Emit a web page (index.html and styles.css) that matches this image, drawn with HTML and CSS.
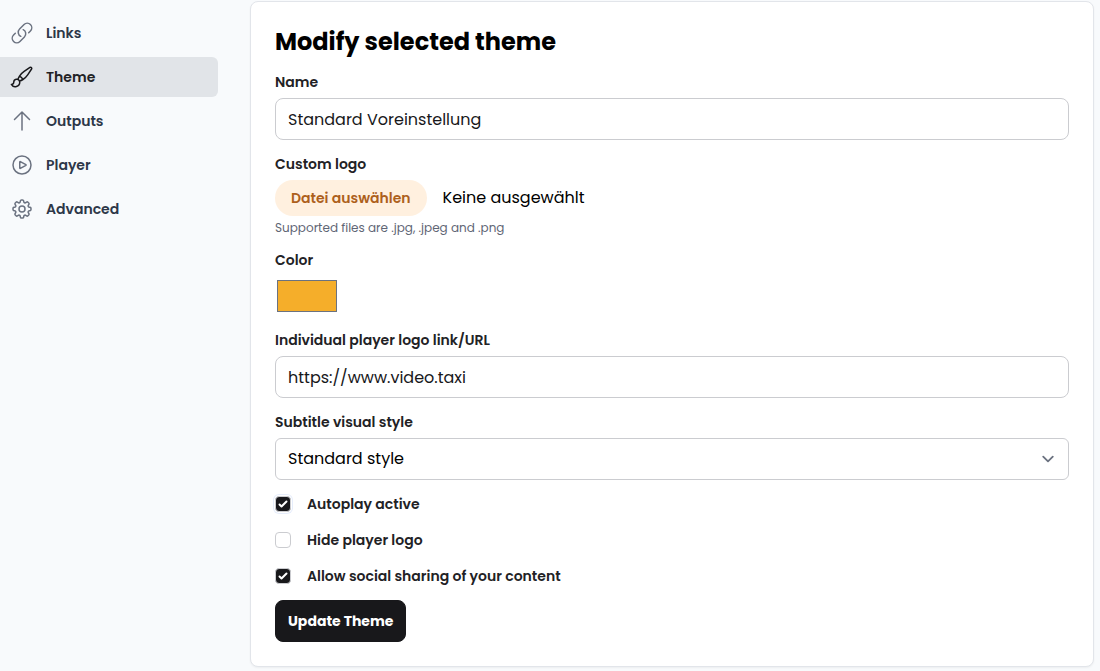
FILE: index.html
```html
<!DOCTYPE html>
<html lang="en">
<head>
  <meta charset="UTF-8" />
  <meta name="viewport" content="width=device-width, initial-scale=1" />
  <title>Modify selected theme</title>
  <link rel="stylesheet" href="styles.css">
</head>
<body>
  <div class="layout">
    <nav class="sidebar">
      <a href="#">
        <svg class="icon" viewBox="0 0 24 24" aria-hidden="true">
          <path d="M13.19 8.688a4.5 4.5 0 0 1 1.242 7.244l-4.5 4.5a4.5 4.5 0 0 1-6.364-6.364l1.757-1.757m13.35-.622 1.757-1.757a4.5 4.5 0 0 0-6.364-6.364l-4.5 4.5a4.5 4.5 0 0 0 1.242 7.244" />
        </svg>
        Links
      </a>
      <a href="#" class="active" aria-current="page">
        <svg class="icon" viewBox="0 0 24 24" aria-hidden="true">
          <path d="M9.53 16.122a3 3 0 0 0-5.78 1.128 2.25 2.25 0 0 1-2.4 2.245 4.5 4.5 0 0 0 8.4-2.245c0-.399-.078-.78-.22-1.128Zm0 0a15.998 15.998 0 0 0 3.388-1.62m-5.043-.025a15.994 15.994 0 0 1 1.622-3.395m3.42 3.42a15.995 15.995 0 0 0 4.764-4.648l3.876-5.814a1.151 1.151 0 0 0-1.597-1.597L14.146 6.32a15.996 15.996 0 0 0-4.649 4.763m3.42 3.42a6.776 6.776 0 0 0-3.42-3.42" />
        </svg>
        Theme
      </a>
      <a href="#">
        <svg class="icon" viewBox="0 0 24 24" aria-hidden="true">
          <path d="M4.5 10.5 12 3m0 0 7.5 7.5M12 3v18" />
        </svg>
        Outputs
      </a>
      <a href="#">
        <svg class="icon" viewBox="0 0 24 24" aria-hidden="true">
          <path d="M21 12a9 9 0 1 1-18 0 9 9 0 0 1 18 0Z" />
          <path d="M15.91 11.672a.375.375 0 0 1 0 .656l-5.603 3.113a.375.375 0 0 1-.557-.328V8.887c0-.286.307-.466.557-.327l5.603 3.112Z" />
        </svg>
        Player
      </a>
      <a href="#">
        <svg class="icon" viewBox="0 0 24 24" aria-hidden="true">
          <path d="M10.343 3.94c.09-.542.56-.94 1.11-.94h1.093c.55 0 1.02.398 1.11.94l.149.894c.07.424.384.764.78.93.398.164.855.142 1.205-.108l.737-.527a1.125 1.125 0 0 1 1.45.12l.773.774c.39.389.44 1.002.12 1.45l-.527.737c-.25.35-.272.806-.107 1.204.165.397.505.71.93.78l.893.15c.543.09.94.559.94 1.109v1.094c0 .55-.397 1.02-.94 1.11l-.894.149c-.424.07-.764.383-.929.78-.165.398-.143.854.107 1.204l.527.738c.32.447.269 1.06-.12 1.45l-.774.773a1.125 1.125 0 0 1-1.449.12l-.738-.527c-.35-.25-.806-.272-1.203-.107-.398.165-.71.505-.781.929l-.149.894c-.09.542-.56.94-1.11.94h-1.094c-.55 0-1.019-.398-1.11-.94l-.148-.894c-.071-.424-.384-.764-.781-.93-.398-.164-.854-.142-1.204.108l-.738.527c-.447.32-1.06.269-1.45-.12l-.773-.774a1.125 1.125 0 0 1-.12-1.45l.527-.737c.25-.35.272-.806.108-1.204-.165-.397-.506-.71-.93-.78l-.894-.15c-.542-.09-.94-.56-.94-1.109v-1.094c0-.55.398-1.02.94-1.11l.894-.149c.424-.07.765-.383.93-.78.165-.398.143-.854-.108-1.204l-.526-.738a1.125 1.125 0 0 1 .12-1.45l.773-.773a1.125 1.125 0 0 1 1.45-.12l.737.527c.35.25.807.272 1.204.107.397-.165.71-.505.78-.929l.15-.894Z" />
          <path d="M15 12a3 3 0 1 1-6 0 3 3 0 0 1 6 0Z" />
        </svg>
        Advanced
      </a>
    </nav>

    <main class="card">
      <h2>Modify selected theme</h2>
      <form class="theme-form">
        <div class="field">
          <label for="name">Name</label>
          <input type="text" id="name" class="text-input" value="Standard Voreinstellung" />
        </div>

        <div class="field">
          <label for="logo">Custom logo</label>
          <div class="file-row">
            <input type="file" id="logo" class="file-input" accept=".jpg,.jpeg,.png" />
            <label for="logo" class="file-btn">Datei auswählen</label>
            <span class="file-name">Keine ausgewählt</span>
          </div>
          <p class="hint">Supported files are .jpg, .jpeg and .png</p>
        </div>

        <div class="field">
          <label for="color">Color</label>
          <input type="color" id="color" class="color-input" value="#f5ae2a" />
        </div>

        <div class="field">
          <label for="url">Individual player logo link/URL</label>
          <input type="text" id="url" class="text-input" value="https://www.video.taxi" />
        </div>

        <div class="field">
          <label for="subtitle">Subtitle visual style</label>
          <select id="subtitle" class="text-input select-input">
            <option>Standard style</option>
          </select>
        </div>

        <div class="checks">
          <label><input type="checkbox" class="check check-ring" checked /> Autoplay active</label>
          <label><input type="checkbox" class="check" /> Hide player logo</label>
          <label><input type="checkbox" class="check" checked /> Allow social sharing of your content</label>
        </div>

        <button type="submit" class="submit-btn">Update Theme</button>
      </form>
    </main>
  </div>
</body>
</html>
```

FILE: styles.css
```css
* {
  box-sizing: border-box;
}
body {
  font-family: Poppins, Inter, "Liberation Sans", sans-serif;
  font-size: 16px;
  line-height: 24px;
  background: #f8fafc;
  color: #000;
  margin: 0;
}
.layout {
  display: grid;
  grid-template-columns: 218px 1fr;
  gap: 32px;
  align-items: start;
  padding: 1px 6px 4px 0;
}
.sidebar {
  display: flex;
  flex-direction: column;
  gap: 4px;
  padding-top: 12px;
}
.sidebar a {
  display: flex;
  align-items: center;
  gap: 12px;
  padding: 8px 10px;
  border-radius: 0 6px 6px 0;
  font-size: 14px;
  font-weight: 600;
  color: #2d3748;
  text-decoration: none;
}
.sidebar a:hover,
.sidebar .active {
  background: #e1e4e8;
}
.sidebar .active {
  color: #222225;
}
.icon {
  width: 24px;
  height: 24px;
  fill: none;
  stroke: #6b7280;
  stroke-width: 1.5;
  stroke-linecap: round;
  stroke-linejoin: round;
}
.active .icon {
  stroke: #18181b;
}
.card {
  background: white;
  border: 1px solid #e2e5ea;
  border-radius: 8px;
  padding: 24px;
  box-shadow: 0 1px 2px rgba(0, 0, 0, 0.05);
}
h2 {
  font-size: 24px;
  line-height: 32px;
  font-weight: 700;
  margin: 0 0 14px;
}
.theme-form {
  display: flex;
  flex-direction: column;
  align-items: stretch;
  gap: 14px;
}
.field {
  display: flex;
  flex-direction: column;
  gap: 6px;
}
label {
  font-size: 14px;
  line-height: 20px;
  font-weight: 600;
  color: #222225;
}
.text-input {
  width: 100%;
  height: 42px;
  padding: 8px 12px;
  border: 1px solid #cbccd0;
  border-radius: 8px;
  background-color: white;
  font: inherit;
  color: #18181b;
}
.select-input {
  appearance: none;
  color: #000;
  border-radius: 6px;
  background-image: url("data:image/svg+xml,%3Csvg xmlns='http://www.w3.org/2000/svg' fill='none' viewBox='0 0 20 20'%3E%3Cpath stroke='%236b7280' stroke-linecap='round' stroke-linejoin='round' stroke-width='1.5' d='m6 8 4 4 4-4'/%3E%3C/svg%3E");
  background-repeat: no-repeat;
  background-position: right 8px center;
  background-size: 24px 24px;
}
.file-row {
  display: flex;
  align-items: center;
  gap: 16px;
  position: relative;
}
/* real input stays focusable, the label acts as its button */
.file-input {
  position: absolute;
  width: 1px;
  height: 1px;
  opacity: 0;
}
.file-btn {
  padding: 8px 16px;
  border-radius: 18px;
  background: #fff0df;
  color: #ad601c;
  cursor: pointer;
}
.hint {
  margin: -2px 0 0;
  font-size: 12px;
  line-height: 16px;
  color: #5f6675;
}
.color-input {
  width: 64px;
  height: 40px;
  padding: 0;
  border: none;
  background: none;
}
.color-input::-webkit-color-swatch-wrapper {
  padding: 4px 2px;
}
.color-input::-webkit-color-swatch {
  border: 1px solid #6b7280;
}
.checks {
  display: flex;
  flex-direction: column;
  align-items: flex-start;
  gap: 16px;
}
.checks label {
  display: flex;
  align-items: center;
  gap: 16px;
}
.check {
  appearance: none;
  width: 16px;
  height: 16px;
  margin: 0;
  border: 1px solid #cbccd0;
  border-radius: 4px;
  background-color: white;
}
.check:checked {
  background-color: #18181b;
  background-image: url("data:image/svg+xml,%3Csvg xmlns='http://www.w3.org/2000/svg' viewBox='0 0 16 16' fill='white'%3E%3Cpath d='M12.207 4.793a1 1 0 010 1.414l-5 5a1 1 0 01-1.414 0l-2-2a1 1 0 011.414-1.414L6.5 9.086l4.293-4.293a1 1 0 011.414 0z'/%3E%3C/svg%3E");
  background-origin: border-box;
  background-size: 100% 100%;
}
.check-ring {
  box-shadow: 0 0 0 1px white, 0 0 0 2px #e6edfb;
}
.submit-btn {
  align-self: flex-start;
  height: 42px;
  padding: 0 12px;
  border: 1px solid #18181b;
  border-radius: 8px;
  background: #18181b;
  color: white;
  font: inherit;
  font-size: 14px;
  font-weight: 700;
  cursor: pointer;
}
```
